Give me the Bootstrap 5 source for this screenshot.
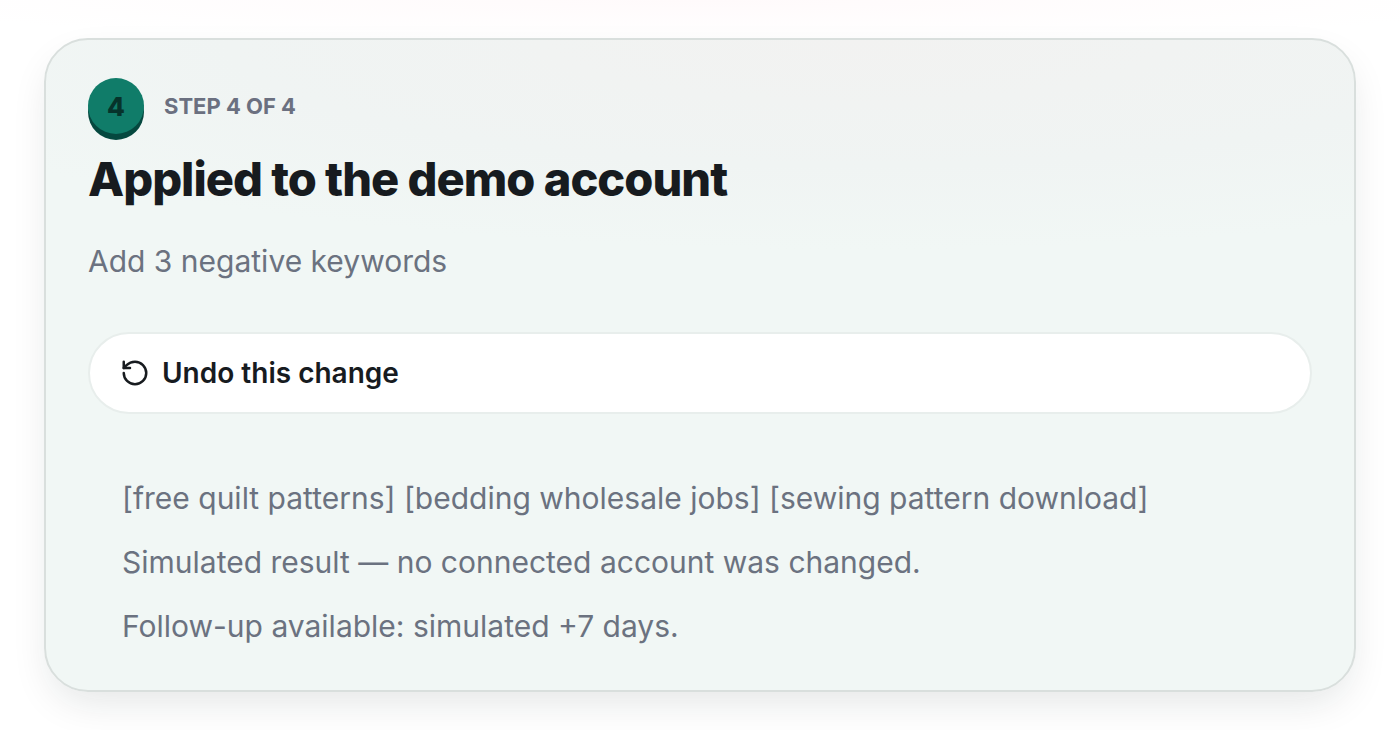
<!DOCTYPE html>
<html lang="en">
<head>
<meta charset="utf-8">
<meta name="viewport" content="width=device-width, initial-scale=1">
<title>Applied to the demo account</title>
<link href="https://cdn.jsdelivr.net/npm/bootstrap@5.3.0/dist/css/bootstrap.min.css" rel="stylesheet">
<style>
body{font-family:Inter,"Liberation Sans",sans-serif;background:#fff radial-gradient(ellipse 60% 40px at 50% 0,#fffafb,#fff) no-repeat;color:#171b1f}
.step-page{padding:38px 44px}
.step-card{border:2px solid #d9dfdd;border-radius:44px;background:radial-gradient(ellipse 80% 210px at 62% 0,#f2f2f1,#f0f4f3 60%,#f1f7f5);box-shadow:0 16px 40px -8px rgba(20,35,30,.12);padding:38px 42px 44px}
.step-head{gap:20px}
.step-dot{width:56px;height:56px;border-radius:50%;background:#107c69;box-shadow:0 6px 0 #05483f;font-size:26px;font-weight:800;color:#06332b}
.step-label{font-size:22px;line-height:28px;font-weight:700;color:#6b7080}
.step-title{font-size:47px;line-height:60px;font-weight:800;letter-spacing:-1px;margin:15px 0 32px}
.soft-text{font-size:30px;line-height:40px;color:#6b7280}
.undo-btn{background:#fff;border:2px solid #e8eeec;border-radius:42px;padding:18px 30px;gap:12px;font-size:28px;line-height:42px;font-weight:600;color:#171b1f;margin:51px 0 64px}
.undo-icon{width:30px;height:30px;flex:none}
.result-notes{padding:0 34px;gap:24px}
</style>
</head>
<body>
<main class="step-page">
  <section class="step-card">
    <div class="step-head d-flex align-items-center">
      <span class="step-dot d-flex align-items-center justify-content-center">4</span>
      <span class="step-label">STEP 4 OF 4</span>
    </div>
    <h1 class="step-title">Applied to the demo account</h1>
    <p class="soft-text mb-0">Add 3 negative keywords</p>
    <button type="button" class="undo-btn w-100 d-flex align-items-center text-start">
      <svg class="undo-icon" viewBox="0 0 24 24" fill="none" stroke="currentColor" stroke-width="2" stroke-linecap="round" stroke-linejoin="round" aria-hidden="true"><path d="M3 12a9 9 0 1 0 9-9 9.75 9.75 0 0 0-6.74 2.74L3 8"/><path d="M3 3v5h5"/></svg>
      <span>Undo this change</span>
    </button>
    <div class="result-notes soft-text d-flex flex-column">
      <p class="mb-0">[free quilt patterns] [bedding wholesale jobs] [sewing pattern download]</p>
      <p class="mb-0">Simulated result — no connected account was changed.</p>
      <p class="mb-0">Follow-up available: simulated +7 days.</p>
    </div>
  </section>
</main>
<script src="https://cdn.jsdelivr.net/npm/bootstrap@5.3.0/dist/js/bootstrap.bundle.min.js"></script>
</body>
</html>
